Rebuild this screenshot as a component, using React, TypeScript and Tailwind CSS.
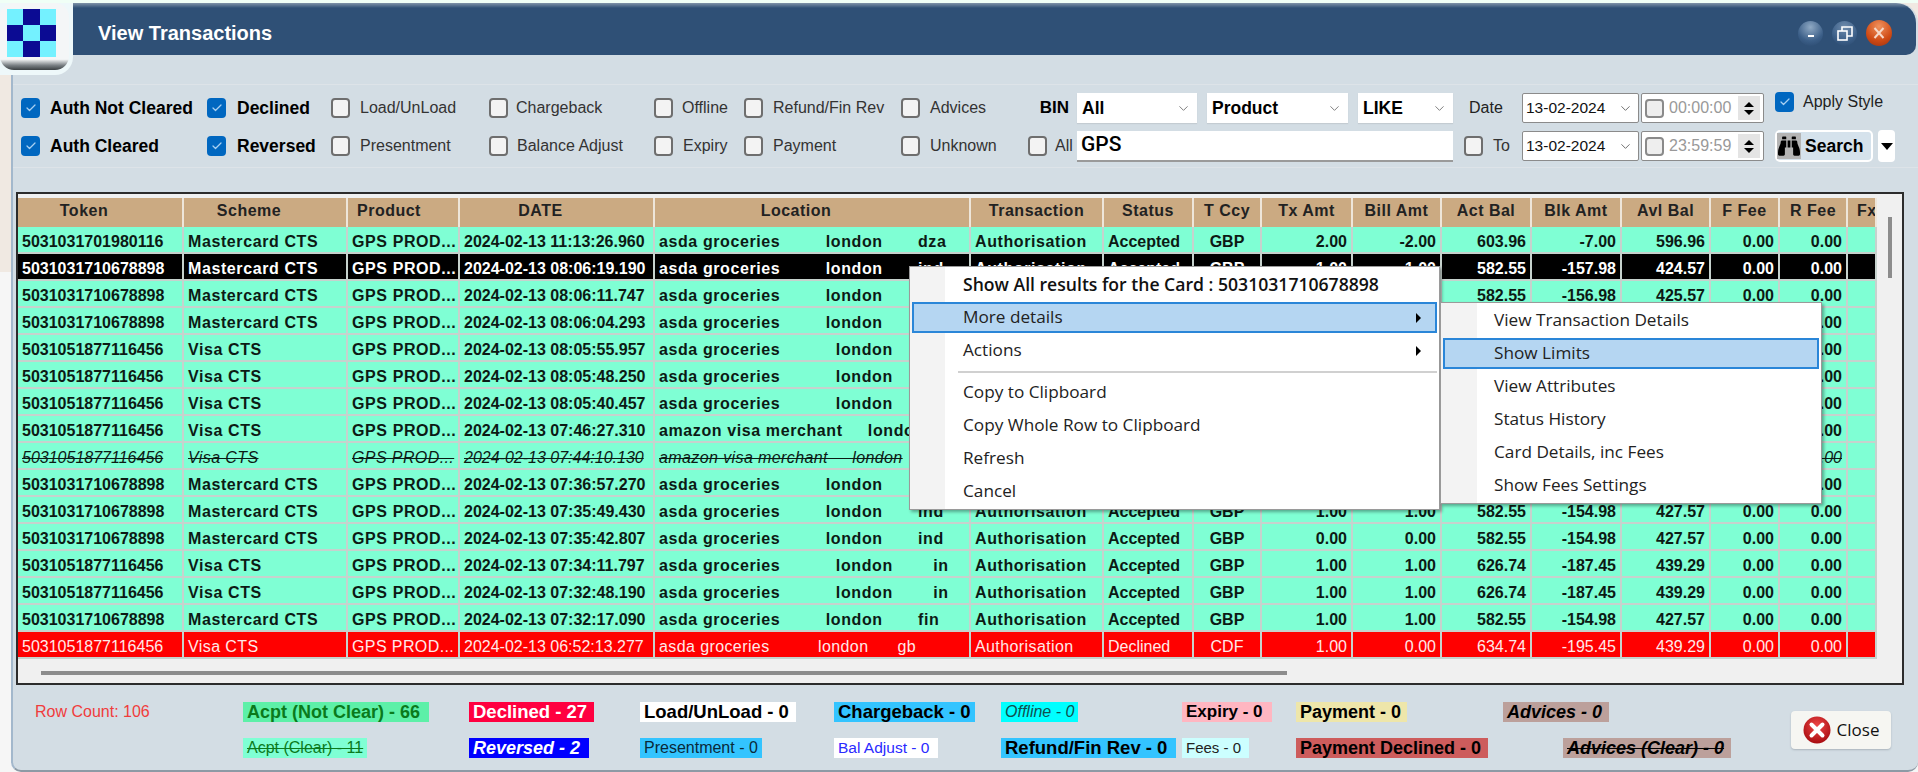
import { Check, ChevronDown } from 'lucide-react';
import { FaBinoculars } from 'react-icons/fa';

const tableCols =
  'grid grid-cols-[166px_164px_112px_195px_316px_133px_90px_68px_91px_89px_90px_90px_89px_69px_68px_29px] grid-rows-[27px]';
const headerCols =
  'grid grid-cols-[166px_164px_112px_195px_316px_133px_90px_68px_91px_89px_90px_90px_89px_69px_68px_29px]';
const filterCols =
  'grid grid-cols-[186px_124px_158px_165px_90px_157px_127px_49px_130px_151px_106px_58px_119px_134px_1fr]';
const legendCols =
  'grid grid-cols-[208px_226px_171px_194px_167px_181px_114px_1fr]';

const MC = '5031031710678898';
const VISA = '5031051877116456';
const ASDA_MC = (c: string) => `asda groceries         london       ${c}`;
const ASDA_VISA = (c: string) => `asda groceries           london        ${c}`;
const AMAZON = 'amazon visa merchant     london';

type Row = {
  token: string;
  visa?: boolean;
  date: string;
  location: string;
  tx: string;
  bill: string;
  act: string;
  blk: string;
  avl: string;
  kind?: 'selected' | 'struck' | 'declined';
  status?: string;
  ccy?: string;
};

const rows: Row[] = [
  { token: '5031031701980116', date: '2024-02-13 11:13:26.960', location: ASDA_MC('dza'), tx: '2.00', bill: '-2.00', act: '603.96', blk: '-7.00', avl: '596.96' },
  { token: MC, date: '2024-02-13 08:06:19.190', location: ASDA_MC('ind'), tx: '1.00', bill: '-1.00', act: '582.55', blk: '-157.98', avl: '424.57', kind: 'selected' },
  { token: MC, date: '2024-02-13 08:06:11.747', location: ASDA_MC('ind'), tx: '1.00', bill: '1.00', act: '582.55', blk: '-156.98', avl: '425.57' },
  { token: MC, date: '2024-02-13 08:06:04.293', location: ASDA_MC('ind'), tx: '1.00', bill: '1.00', act: '582.55', blk: '-155.98', avl: '426.57' },
  { token: VISA, visa: true, date: '2024-02-13 08:05:55.957', location: ASDA_VISA('in'), tx: '1.00', bill: '1.00', act: '626.74', blk: '-190.45', avl: '436.29' },
  { token: VISA, visa: true, date: '2024-02-13 08:05:48.250', location: ASDA_VISA('in'), tx: '1.00', bill: '1.00', act: '626.74', blk: '-189.45', avl: '437.29' },
  { token: VISA, visa: true, date: '2024-02-13 08:05:40.457', location: ASDA_VISA('in'), tx: '1.00', bill: '1.00', act: '626.74', blk: '-188.45', avl: '438.29' },
  { token: VISA, visa: true, date: '2024-02-13 07:46:27.310', location: AMAZON, tx: '1.00', bill: '1.00', act: '626.74', blk: '-187.45', avl: '439.29' },
  { token: VISA, visa: true, date: '2024-02-13 07:44:10.130', location: AMAZON, tx: '1.00', bill: '1.00', act: '626.74', blk: '-187.45', avl: '439.29', kind: 'struck' },
  { token: MC, date: '2024-02-13 07:36:57.270', location: ASDA_MC('ind'), tx: '1.00', bill: '1.00', act: '582.55', blk: '-154.98', avl: '427.57' },
  { token: MC, date: '2024-02-13 07:35:49.430', location: ASDA_MC('ind'), tx: '1.00', bill: '1.00', act: '582.55', blk: '-154.98', avl: '427.57' },
  { token: MC, date: '2024-02-13 07:35:42.807', location: ASDA_MC('ind'), tx: '0.00', bill: '0.00', act: '582.55', blk: '-154.98', avl: '427.57' },
  { token: VISA, visa: true, date: '2024-02-13 07:34:11.797', location: ASDA_VISA('in'), tx: '1.00', bill: '1.00', act: '626.74', blk: '-187.45', avl: '439.29' },
  { token: VISA, visa: true, date: '2024-02-13 07:32:48.190', location: ASDA_VISA('in'), tx: '1.00', bill: '1.00', act: '626.74', blk: '-187.45', avl: '439.29' },
  { token: MC, date: '2024-02-13 07:32:17.090', location: ASDA_MC('fin'), tx: '1.00', bill: '1.00', act: '582.55', blk: '-154.98', avl: '427.57' },
  { token: VISA, visa: true, date: '2024-02-13 06:52:13.277', location: 'asda groceries          london      gb', tx: '1.00', bill: '0.00', act: '634.74', blk: '-195.45', avl: '439.29', kind: 'declined', status: 'Declined', ccy: 'CDF' },
];

// pr- values pull the first few captions left of their column centre, as in the app
const headers = [
  { label: 'Token', className: 'pr-[32px] text-center' },
  { label: 'Scheme', className: 'pr-[32px] text-center' },
  { label: 'Product', className: 'pl-[9px]' },
  { label: 'DATE', className: 'pr-[32px] text-center' },
  { label: 'Location', className: 'pr-[32px] text-center' },
  { label: 'Transaction', className: 'text-center' },
  { label: 'Status', className: 'text-center' },
  { label: 'T Ccy', className: 'text-center' },
  { label: 'Tx Amt', className: 'text-center' },
  { label: 'Bill Amt', className: 'text-center' },
  { label: 'Act Bal', className: 'text-center' },
  { label: 'Blk Amt', className: 'text-center' },
  { label: 'Avl Bal', className: 'text-center' },
  { label: 'F Fee', className: 'text-center' },
  { label: 'R Fee', className: 'text-center' },
  { label: 'Fx', className: 'pl-[9px]' },
];

function Box({ checked }: { checked?: boolean }) {
  if (checked) {
    return (
      <span className="flex h-[20px] w-[19px] shrink-0 items-center justify-center rounded-[4px] bg-[#0067c0]">
        <Check className="text-[#a8d0f2]" size={12} strokeWidth={2.5} />
      </span>
    );
  }
  return <span className="h-[20px] w-[19px] shrink-0 rounded-[4px] border-2 border-[#6e6e6e] bg-[#f3f3f3]" />;
}

function CheckLabel({ label, checked, bold, gap = 'gap-[9px]' }: { label: string; checked?: boolean; bold?: boolean; gap?: string }) {
  return (
    <div className={`flex items-center whitespace-nowrap ${gap}`}>
      <Box checked={checked} />
      <span className={bold ? 'text-[17.5px] font-bold text-black' : 'text-[16px] text-[#333]'}>{label}</span>
    </div>
  );
}

function Select({ value, width }: { value: string; width: string }) {
  return (
    <div className={`flex h-[30px] items-center justify-between bg-white pl-[5px] pr-[6px] shadow-[0_1px_1px_#c4ccd2] ${width}`}>
      <span className="text-[17.5px] font-bold text-black">{value}</span>
      <ChevronDown className="text-[#777]" size={15} strokeWidth={1.5} />
    </div>
  );
}

function DatePick({ value }: { value: string }) {
  return (
    <div className="flex h-[30px] w-[117px] items-center justify-between rounded-[2px] border border-[#8b8b8b] bg-white pl-[3px] pr-[5px]">
      <span className="text-[15.5px] text-[#111]">{value}</span>
      <ChevronDown className="text-[#666]" size={15} strokeWidth={1.5} />
    </div>
  );
}

function TimePick({ value }: { value: string }) {
  return (
    <div className="flex h-[30px] w-[123px] items-center rounded-[2px] border border-[#8b8b8b] bg-white pl-[3px] pr-[3px]">
      <span className="h-[19px] w-[19px] rounded-[4px] border-2 border-[#8a8a8a] bg-[#eeeeee]" />
      <span className="ml-[5px] flex-1 text-[16px] text-[#999]">{value}</span>
      <div className="flex h-[24px] w-[22px] flex-col items-center justify-center gap-[3px] bg-[#e4e4e4]">
        <span className="h-0 w-0 border-x-[5px] border-b-[5px] border-x-transparent border-b-black" />
        <span className="h-0 w-0 border-x-[5px] border-t-[5px] border-x-transparent border-t-black" />
      </div>
    </div>
  );
}

function Logo() {
  const cells = [0, 1, 0, 1, 0, 1, 0, 1, 0];
  return (
    <div className="absolute left-0 top-[3px] h-[72px] w-[73px] rounded-br-[18px] bg-[#eef8fa]">
      <div className="h-[67px] w-[69px] rounded-[14px] bg-[linear-gradient(#f4f6f7_84%,#7a8084_93%,#3a3f42)] pl-[7px] pt-[6px]">
        <div className="grid h-[48px] w-[49px] grid-cols-3 grid-rows-3">
          {cells.map((c, i) => (
            <div className={c ? 'bg-[#0b0b93]' : 'bg-[#74f1ff]'} key={i} />
          ))}
        </div>
      </div>
    </div>
  );
}

function TitleButtons() {
  return (
    <div className="flex items-center gap-[9px] pr-[24px]">
      <div className="flex h-[25px] w-[25px] items-center justify-center rounded-full bg-[radial-gradient(circle_at_50%_25%,#8fa9c4,#3c5f88_60%,#27466b)]">
        <span className="mt-[5px] h-[2px] w-[6px] bg-white" />
      </div>
      <div className="flex h-[25px] w-[25px] items-center justify-center rounded-full bg-[radial-gradient(circle_at_50%_25%,#6f8cad,#3c5f88_60%,#27466b)]">
        <svg fill="none" height="16" stroke="white" strokeWidth="1.6" viewBox="0 0 16 16" width="16">
          <rect height="9" width="9" x="1" y="6" />
          <path d="M5 6V2h10v9h-5" />
        </svg>
      </div>
      <div className="flex h-[26px] w-[26px] items-center justify-center rounded-full bg-[radial-gradient(circle_at_50%_25%,#f0925e,#cf4a14_60%,#9c3210)]">
        <svg fill="none" height="14" stroke="#f6d8c8" strokeWidth="2" viewBox="0 0 14 14" width="14">
          <path d="M2.5 2 11.5 12M11.5 2 2.5 12" />
        </svg>
      </div>
    </div>
  );
}

function Filters() {
  return (
    <div className="mt-[29px] h-[84px] border-y border-[#dde3e8] pl-[8px] pt-[8px]">
      <div className={`${filterCols} grid-rows-[30px_30px] items-center gap-y-[8px]`}>
        <CheckLabel bold checked gap="gap-[10px]" label="Auth Not Cleared" />
        <CheckLabel bold checked gap="gap-[11px]" label="Declined" />
        <CheckLabel gap="gap-[10px]" label="Load/UnLoad" />
        <CheckLabel gap="gap-[8px]" label="Chargeback" />
        <CheckLabel label="Offline" />
        <CheckLabel gap="gap-[10px]" label="Refund/Fin Rev" />
        <CheckLabel gap="gap-[10px]" label="Advices" />
        <span className="pr-[8px] text-right text-[17px] font-bold text-black">BIN</span>
        <Select value="All" width="w-[120px]" />
        <Select value="Product" width="w-[141px]" />
        <Select value="LIKE" width="w-[95px]" />
        <span className="pl-[5px] text-[16px] text-[#222]">Date</span>
        <DatePick value="13-02-2024" />
        <TimePick value="00:00:00" />
        <div className="-mt-[13px] flex items-center gap-[9px] whitespace-nowrap">
          <Box checked />
          <span className="text-[16px] text-[#222]">Apply Style</span>
        </div>

        <CheckLabel bold checked gap="gap-[10px]" label="Auth Cleared" />
        <CheckLabel bold checked gap="gap-[11px]" label="Reversed" />
        <CheckLabel gap="gap-[10px]" label="Presentment" />
        <CheckLabel gap="gap-[9px]" label="Balance Adjust" />
        <CheckLabel gap="gap-[10px]" label="Expiry" />
        <CheckLabel gap="gap-[10px]" label="Payment" />
        <CheckLabel gap="gap-[10px]" label="Unknown" />
        <CheckLabel gap="gap-[8px]" label="All" />
        <div className="col-span-3 flex h-[31px] w-[376px] items-center border-b-2 border-[#9a9a9a] bg-white pl-[4px] font-['Roboto',sans-serif] text-[21px] font-medium text-black">
          GPS
        </div>
        <CheckLabel gap="gap-[10px]" label="To" />
        <DatePick value="13-02-2024" />
        <TimePick value="23:59:59" />
        <div className="flex items-center gap-[5px]">
          <div className="flex h-[32px] w-[98px] items-center rounded-[5px] border-2 border-white bg-[#d5e2ec]">
            <span className="flex h-[26px] w-[24px] shrink-0 items-center justify-center bg-[#b4b4b4]">
              <FaBinoculars className="text-black" size={22} />
            </span>
            <span className="pl-[4px] text-[17.5px] font-bold text-black">Search</span>
          </div>
          <div className="flex h-[32px] w-[17px] items-center justify-center rounded-[4px] bg-white">
            <span className="h-0 w-0 border-x-[6px] border-t-[7px] border-x-transparent border-t-black" />
          </div>
        </div>
      </div>
    </div>
  );
}

function cellsFor(row: Row) {
  return [
    { text: row.token },
    { text: row.visa ? 'Visa CTS' : 'Mastercard CTS', wide: true },
    { text: 'GPS PROD...', wide: true },
    { text: row.date },
    { text: row.location, wide: true },
    { text: 'Authorisation', wide: true },
    { text: row.status ?? 'Accepted' },
    { text: row.ccy ?? 'GBP', center: true },
    { text: row.tx, right: true },
    { text: row.bill, right: true },
    { text: row.act, right: true },
    { text: row.blk, right: true },
    { text: row.avl, right: true },
    { text: '0.00', right: true },
    { text: '0.00', right: true },
    { text: '' },
  ];
}

function TableRow({ row }: { row: Row }) {
  let tone = 'bg-[#7fffd4] text-[#0c1a14] font-bold';
  if (row.kind === 'selected') tone = 'bg-black text-white font-bold';
  if (row.kind === 'struck') tone = 'bg-[#7fffd4] text-[#0c1a14] italic line-through';
  if (row.kind === 'declined') tone = 'bg-[#ff0000] text-[#ffe9e9]';
  const wideClass = row.kind === 'struck' || row.kind === 'declined' ? 'tracking-[0.4px]' : 'tracking-[0.6px]';
  return (
    <div className={`${tableCols} h-[27px] text-[16px] leading-[29px] ${tone}`}>
      {cellsFor(row).map((c, i) => (
        <div
          className={`overflow-hidden whitespace-pre border-b-2 border-r-2 border-[#c6d2cd] px-[4px] ${c.right ? 'text-right' : ''} ${c.center ? 'text-center' : ''} ${c.wide ? wideClass : ''}`}
          key={i}
        >
          {c.text}
        </div>
      ))}
    </div>
  );
}

function Table() {
  return (
    <div className="ml-[3px] flex h-[493px] w-[1888px] border-2 border-[#2c2c2c] bg-[#f0f0f0] pt-[4px]">
      <div className="w-[1859px]">
        <div className={`${headerCols} h-[29px] bg-[#cbaa82] text-[16px] font-bold leading-[26px] tracking-[0.5px] text-[#222]`}>
          {headers.map((h) => (
            <div className={`overflow-hidden border-r-2 border-[#eee6da] ${h.className}`} key={h.label}>
              {h.label}
            </div>
          ))}
        </div>
        {rows.map((r, i) => (
          <TableRow key={i} row={r} />
        ))}
        <div className="ml-[23px] mt-[12px] h-[4px] w-[1246px] bg-[#8c8c8c]" />
      </div>
      <div className="flex-1 pl-[11px] pt-[19px]">
        <div className="h-[61px] w-[4px] bg-[#8c8c8c]" />
      </div>
    </div>
  );
}

function Tag({ label, className }: { label: string; className: string }) {
  return <span className={`block h-[20px] overflow-hidden whitespace-pre pl-[4px] leading-[20px] ${className}`}>{label}</span>;
}

function Legend() {
  return (
    <div className="flex h-[84px] items-start justify-between pl-[22px] pr-[27px]">
      <div className={`${legendCols} mt-[17px] w-[1600px] gap-y-[16px]`}>
        <span className="text-[16px] leading-[20px] text-[#f03c3c]">Row Count: 106</span>
        <Tag className="w-[186px] bg-[#5df0a8] text-[18px] font-bold text-[#0a7a1c]" label="Acpt (Not Clear) - 66" />
        <Tag className="w-[125px] bg-[#ff0040] text-[18.5px] font-bold text-white" label="Declined - 27" />
        <Tag className="w-[156px] bg-white text-[18.5px] font-bold text-black" label="Load/UnLoad - 0" />
        <Tag className="w-[141px] bg-[#33c4ff] text-[18.5px] font-bold text-black" label="Chargeback - 0" />
        <Tag className="w-[77px] bg-[#00ffff] text-[16px] italic text-[#11504f]" label="Offline - 0" />
        <Tag className="w-[90px] bg-[#ffb6c1] text-[17px] font-bold text-black" label="Expiry - 0" />
        <div className="flex items-start gap-[96px]">
          <Tag className="w-[111px] bg-[#eee6aa] text-[18px] font-bold text-black" label="Payment - 0" />
          <Tag className="w-[106px] bg-[#bca09b] text-[18px] font-bold italic text-black" label="Advices - 0" />
        </div>

        <div />
        <Tag className="w-[124px] bg-[#7fffd4] text-[16px] text-[#0a7a1c] line-through" label="Acpt (Clear) - 11" />
        <Tag className="w-[120px] bg-[#0000ff] text-[18px] font-bold italic text-white" label="Reversed - 2" />
        <Tag className="w-[122px] bg-[#33c4ff] text-[16px] text-[#0a2a3a]" label="Presentment - 0" />
        <Tag className="w-[104px] bg-white text-[15.5px] text-[#2a2aff]" label="Bal Adjust - 0" />
        <Tag className="w-[175px] bg-[#33c4ff] text-[18.5px] font-bold text-black" label="Refund/Fin Rev - 0" />
        <Tag className="w-[67px] bg-[#ccffff] text-[15px] text-[#222]" label="Fees - 0" />
        <div className="flex items-start gap-[75px]">
          <Tag className="w-[192px] bg-[#cd5c5c] text-[18px] font-bold text-black" label="Payment Declined - 0" />
          <Tag className="w-[168px] bg-[#bca09b] text-[18px] font-bold italic text-black line-through" label="Advices (Clear) - 0" />
        </div>
      </div>
      <div className="mt-[26px] flex h-[38px] w-[100px] items-center justify-center gap-[6px] rounded-[4px] bg-[#f6f6f2] shadow-[0_1px_2px_#aab4bc]">
        <svg height="28" viewBox="0 0 28 28" width="28">
          <defs>
            <radialGradient cx="50%" cy="35%" id="closeRed" r="65%">
              <stop offset="0%" stopColor="#f04848" />
              <stop offset="100%" stopColor="#a80c10" />
            </radialGradient>
          </defs>
          <circle cx="14" cy="14" fill="url(#closeRed)" r="13.5" />
          <path d="M8.5 8.5 19.5 19.5M19.5 8.5 8.5 19.5" stroke="#fff" strokeLinecap="round" strokeWidth="4" />
        </svg>
        <span className="font-['Open_Sans',sans-serif] text-[17px] text-[#111]">Close</span>
      </div>
    </div>
  );
}

function MenuItem({ label, active, arrow, bold }: { label: string; active?: boolean; arrow?: boolean; bold?: boolean }) {
  return (
    <div className="h-[33px] px-[2px] py-px">
      <div className={`flex h-[31px] items-center justify-between border-2 pl-[49px] pr-[14px] ${active ? 'border-[#2a86d8] bg-[#b5d6f2]' : 'border-transparent'}`}>
        <span className={bold ? 'text-[17.6px] font-semibold text-[#111]' : '-mt-[2px] text-[#222]'}>{label}</span>
        {arrow && <span className="h-0 w-0 border-y-[5px] border-l-[5px] border-y-transparent border-l-black" />}
      </div>
    </div>
  );
}

function ContextMenus() {
  return (
    <>
      <div className="absolute left-[909px] top-[266px] h-[244px] w-[531px] border border-[#9a9a9a] bg-[linear-gradient(90deg,#f3f3f3_35px,#ffffff_35px)] pt-px font-['Open_Sans',sans-serif] text-[17.2px] shadow-[2px_2px_3px_#0005]">
        <MenuItem bold label="Show All results for the Card : 5031031710678898" />
        <MenuItem active arrow label="More details" />
        <MenuItem arrow label="Actions" />
        <div className="ml-[48px] mr-[2px] mt-[4px] h-[2px] bg-[#d0d0d0]" />
        <div className="h-[3px]" />
        <MenuItem label="Copy to Clipboard" />
        <MenuItem label="Copy Whole Row to Clipboard" />
        <MenuItem label="Refresh" />
        <MenuItem label="Cancel" />
      </div>
      <div className="absolute left-[1440px] top-[302px] h-[202px] w-[382px] border border-[#9a9a9a] bg-[linear-gradient(90deg,#f3f3f3_36px,#ffffff_36px)] pt-px font-['Open_Sans',sans-serif] text-[17.2px] shadow-[2px_2px_3px_#0005]">
        <MenuItem label="View Transaction Details" />
        <MenuItem active label="Show Limits" />
        <MenuItem label="View Attributes" />
        <MenuItem label="Status History" />
        <MenuItem label="Card Details, inc Fees" />
        <MenuItem label="Show Fees Settings" />
      </div>
    </>
  );
}

export default function App() {
  return (
    <div className="relative h-[772px] w-[1918px] overflow-hidden bg-[linear-gradient(#f0e9e2_272px,#f6f6f6_272px)] font-['Liberation_Sans',sans-serif]">
      <div className="h-[3px] bg-[#f0fff6]" />
      <div className="ml-[11px] h-[769px] w-[1907px] rounded-b-[10px] rounded-tr-[20px] border-b-2 border-l-2 border-b-[#8d9aa5] border-l-[#a3b8cc] bg-[#d3dde4]">
        <div className="flex h-[52px] w-[1903px] items-center justify-between rounded-br-[10px] rounded-tr-[20px] bg-[linear-gradient(#7f93a8,#2f5076_5px)] pl-[85px] pt-[8px]">
          <span className="text-[20px] font-bold text-white">View Transactions</span>
          <TitleButtons />
        </div>
        <Filters />
        <div className="h-[24px]" />
        <Table />
        <Legend />
      </div>
      <Logo />
      <ContextMenus />
    </div>
  );
}
